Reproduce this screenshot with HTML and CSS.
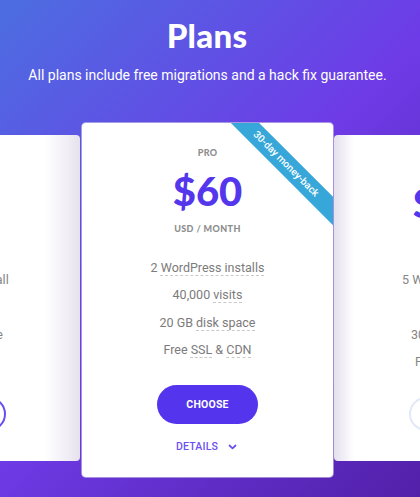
FILE: index.html
```html
<!DOCTYPE html>
<html>
<head>
<meta charset="utf-8">
<link rel="stylesheet" href="styles.css">
</head>
<body>
<section class="plans">
  <h1 class="title">Plans</h1>
  <p class="subtitle">All plans include free migrations and a hack fix guarantee.</p>
  <div class="track">
    <div class="card side side-left">
      <div class="tier">STARTER</div>
      <div class="price">$30</div>
      <div class="period">USD / MONTH</div>
      <ul class="features">
        <li>1 <span class="u">WordPress install</span></li>
        <li>20,000 <span class="u">visits</span></li>
        <li>10 GB <span class="u">disk space</span></li>
        <li>Free <span class="u">SSL</span> &amp; <span class="u">CDN</span></li>
      </ul>
      <button class="btn btn-outline">CHOOSE</button>
      <div class="details">DETAILS</div>
    </div>
    <div class="card main">
      <div class="ribbon">30-day money-back</div>
      <div class="tier">PRO</div>
      <div class="price">$60</div>
      <div class="period">USD / MONTH</div>
      <ul class="features">
        <li>2 <span class="u">WordPress installs</span></li>
        <li>40,000 <span class="u">visits</span></li>
        <li>20 GB <span class="u">disk space</span></li>
        <li>Free <span class="u">SSL</span> &amp; <span class="u">CDN</span></li>
      </ul>
      <button class="btn btn-fill">CHOOSE</button>
      <div class="details">DETAILS
        <svg class="chev-svg" width="9" height="6" viewBox="0 0 9 6"><path d="M1.5 1.5 L4.5 4.3 L7.5 1.5" fill="none" stroke="#6a52f0" stroke-width="1.8" stroke-linecap="round" stroke-linejoin="round"/></svg>
      </div>
    </div>
    <div class="card side side-right">
      <div class="tier">BUSINESS</div>
      <div class="price">$115</div>
      <div class="period">USD / MONTH</div>
      <ul class="features">
        <li>5 <span class="u">WordPress installs</span></li>
        <li>100,000 <span class="u">visits</span></li>
        <li>30 GB <span class="u">disk space</span></li>
        <li>Free <span class="u">SSL</span> &amp; <span class="u">CDN</span></li>
      </ul>
      <button class="btn btn-light">CHOOSE</button>
      <div class="details">DETAILS</div>
    </div>
  </div>
</section>
</body>
</html>
```

FILE: styles.css
```css
* { box-sizing: border-box; }
html, body { margin: 0; padding: 0; }
body {
  width: 420px;
  height: 497px;
  overflow: hidden;
  font-family: Roboto, "Liberation Sans", sans-serif;
}
.plans {
  height: 497px;
  overflow: hidden;
  background: linear-gradient(135deg, #4c6ee1 0%, #6e3be7 50%, #5220a8 100%);
  padding-top: 15px;
}
.title {
  margin: 0;
  text-align: center;
  color: #fff;
  font-family: Lato, sans-serif;
  font-weight: 900;
  font-size: 33px;
  line-height: 40px;
  letter-spacing: 0.3px;
  padding-right: 6px;
}
.subtitle {
  margin: 11px 0 0;
  text-align: center;
  color: #fff;
  font-size: 14px;
  line-height: 18px;
  padding-right: 5px;
}
.track {
  display: flex;
  align-items: flex-start;
  gap: 1px;
  margin-top: 39px;
  margin-left: -170px;
}
.card {
  flex: 0 0 250px;
  width: 250px;
  background: #fff;
  border-radius: 4px;
  text-align: center;
  padding-top: 24px;
  display: flex;
  flex-direction: column;
  align-items: center;
  overflow: hidden;
  position: relative;
}
.main {
  flex-basis: 251px;
  width: 251px;
  height: 354px;
  margin-left: 1px;
  box-shadow: 0 0 0 1px rgba(210, 205, 225, 0.6);
}
.side {
  margin-top: 12px;
  height: 326px;
}
.side .u { text-decoration: none; }
.side .features li { color: #858585; }
.side-left {
  background: linear-gradient(to right, #fff calc(100% - 36px), #f0edf5 calc(100% - 12px), #e5e1ed 100%);
}
.side-right {
  background: linear-gradient(to left, #fff calc(100% - 20px), #ece9f3 calc(100% - 6px), #e4e0ec 100%);
}
.tier {
  font-family: Lato, sans-serif;
  font-weight: 900;
  font-size: 9px;
  line-height: 12px;
  color: #8d8d8d;
  letter-spacing: 0.3px;
}
.price {
  margin-top: 10px;
  font-family: Lato, sans-serif;
  font-weight: 900;
  font-size: 40px;
  line-height: 44px;
  color: #5436ec;
}
.period {
  margin-top: 10px;
  font-family: Lato, sans-serif;
  font-weight: 900;
  font-size: 9px;
  line-height: 12px;
  color: #8d8d8d;
  letter-spacing: 0.4px;
}
.features {
  list-style: none;
  margin: 19px 0 0;
  padding: 0;
}
.features li {
  font-size: 12.5px;
  line-height: 27.4px;
  color: #7b7b7b;
}
.u {
  text-decoration: underline dashed #c9c9c9;
  text-decoration-thickness: 1px;
  text-underline-offset: 3px;
}
.btn {
  margin-top: 21px;
  width: 101px;
  height: 39px;
  border-radius: 20px;
  font-family: Roboto, sans-serif;
  font-weight: 700;
  font-size: 10.5px;
  letter-spacing: 0.2px;
  cursor: pointer;
}
.btn-fill {
  background: #5434ec;
  color: #fff;
  border: none;
}
.btn-outline {
  background: #fff;
  color: #5434ec;
  border: 2px solid #6a4df2;
}
.btn-light {
  background: #fff;
  color: #5434ec;
  border: 2px solid #e1e8f6;
}
.details {
  margin-top: 16px;
  font-size: 10.5px;
  line-height: 14px;
  font-weight: 500;
  color: #6a52f0;
  display: flex;
  align-items: center;
  gap: 10px;
  letter-spacing: 0.2px;
  padding-right: 2px;
}
.chev-svg { display: block; }
.ribbon {
  position: absolute;
  left: 119px;
  top: 31px;
  width: 170px;
  height: 20px;
  background: #36a7d8;
  color: #fff;
  font-size: 10px;
  font-weight: 500;
  line-height: 20px;
  text-align: center;
  transform: rotate(45deg);
}
```
